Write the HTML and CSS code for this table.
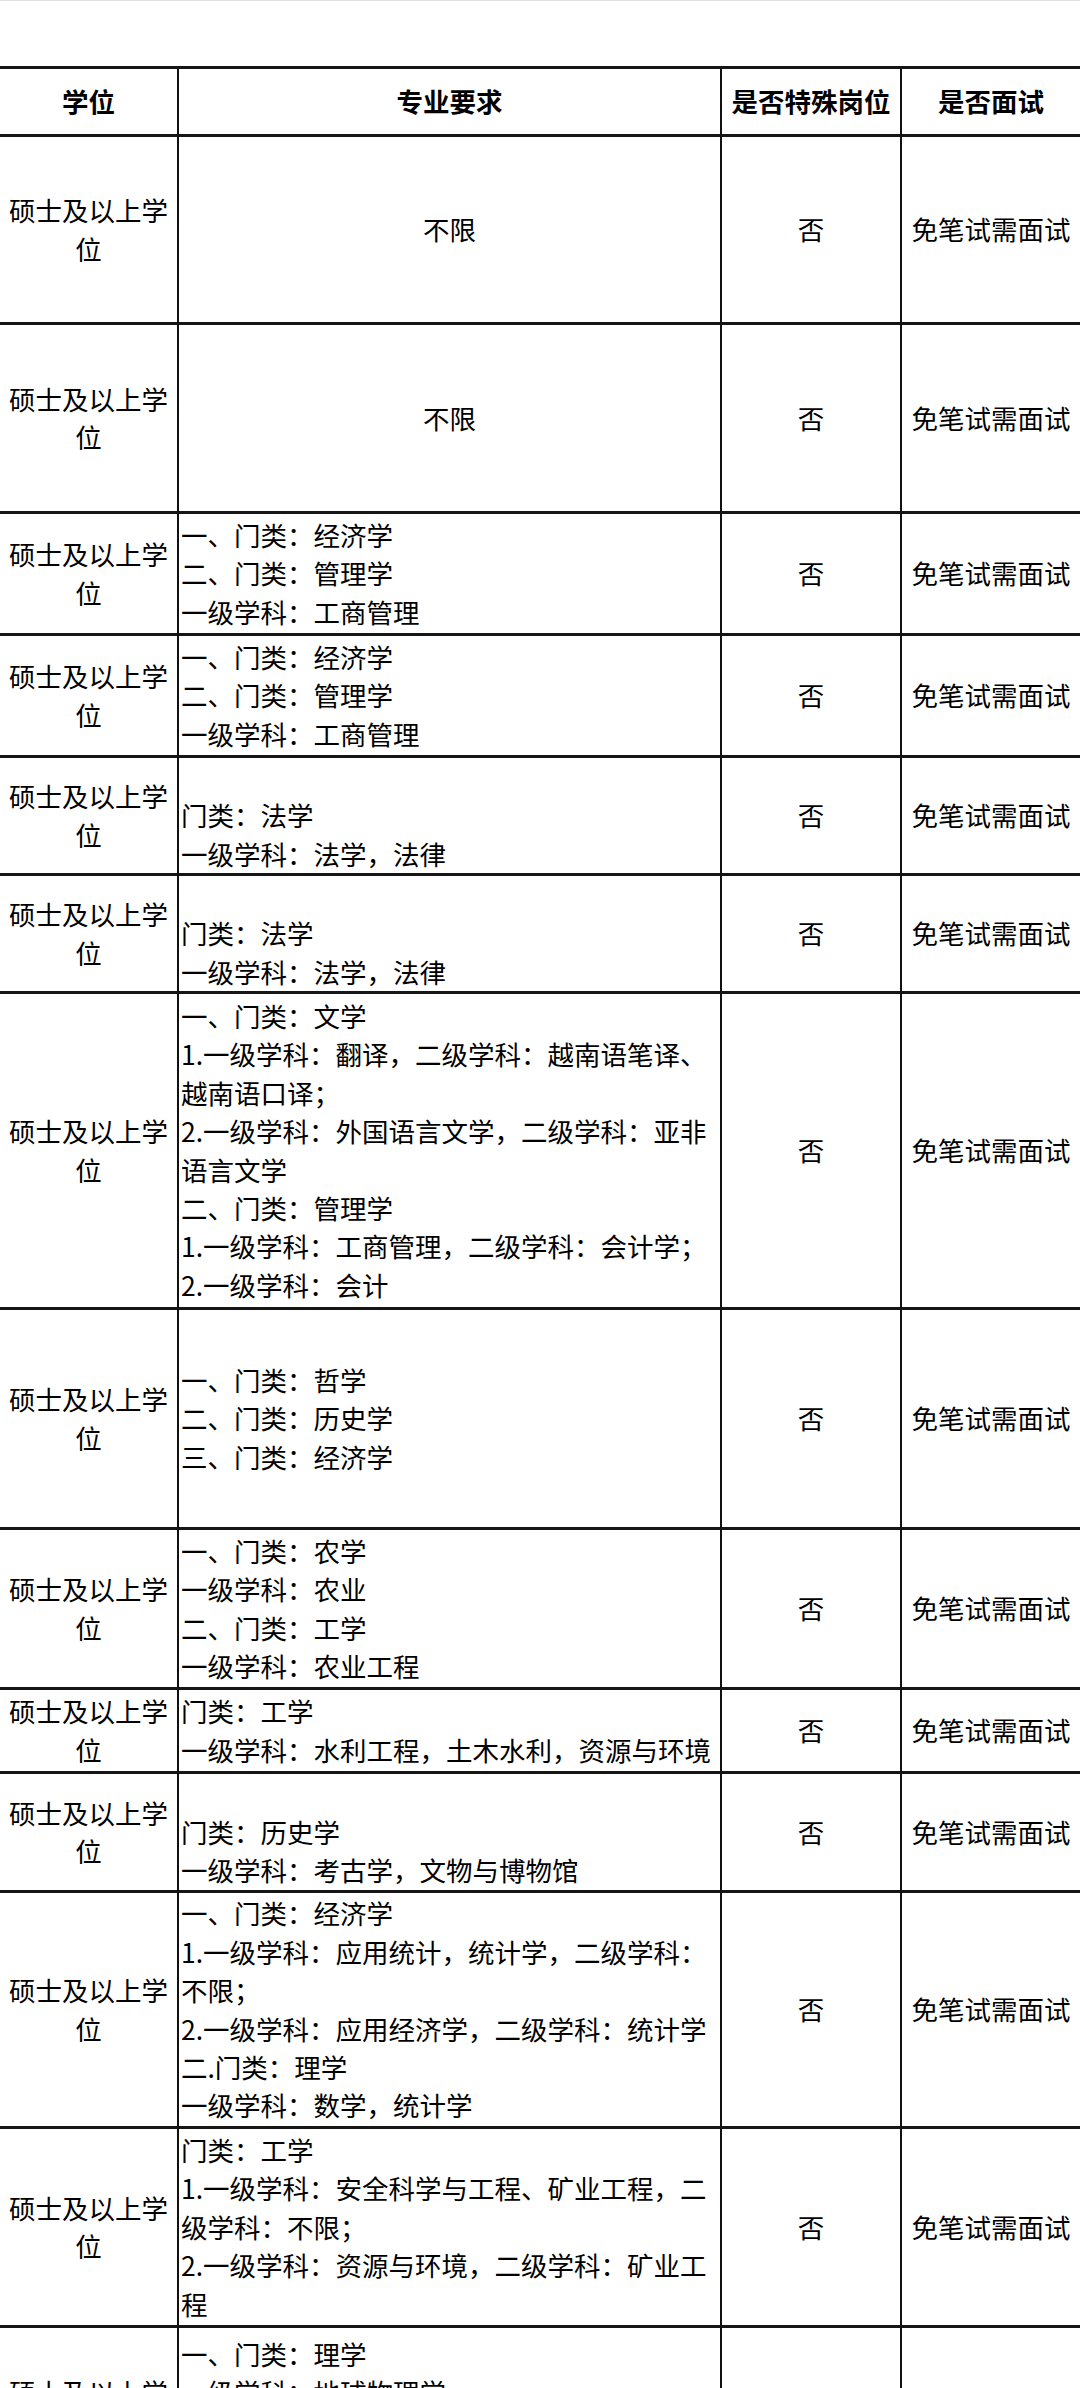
FILE: index.html
```html
<!DOCTYPE html>
<html lang="zh-CN">
<head>
<meta charset="utf-8">
<title>岗位表</title>
<link rel="stylesheet" href="styles.css">
</head>
<body>
<div class="topline"></div>
<div class="wrap">
  <div class="table">
    <div class="cell head c1">学位</div>
    <div class="cell head c2h">专业要求</div>
    <div class="cell head c3">是否特殊岗位</div>
    <div class="cell head c4">是否面试</div>

    <div class="cell c1">硕士及以上学位</div>
    <div class="cell c2h">不限</div>
    <div class="cell c3">否</div>
    <div class="cell c4">免笔试需面试</div>

    <div class="cell c1">硕士及以上学位</div>
    <div class="cell c2h">不限</div>
    <div class="cell c3">否</div>
    <div class="cell c4">免笔试需面试</div>

    <div class="cell c1">硕士及以上学位</div>
    <div class="cell c2"><p>一、门类：经济学<br>二、门类：管理学<br>一级学科：工商管理</p></div>
    <div class="cell c3">否</div>
    <div class="cell c4">免笔试需面试</div>

    <div class="cell c1">硕士及以上学位</div>
    <div class="cell c2"><p>一、门类：经济学<br>二、门类：管理学<br>一级学科：工商管理</p></div>
    <div class="cell c3">否</div>
    <div class="cell c4">免笔试需面试</div>

    <div class="cell c1">硕士及以上学位</div>
    <div class="cell c2"><p><br>门类：法学<br>一级学科：法学，法律</p></div>
    <div class="cell c3">否</div>
    <div class="cell c4">免笔试需面试</div>

    <div class="cell c1">硕士及以上学位</div>
    <div class="cell c2"><p><br>门类：法学<br>一级学科：法学，法律</p></div>
    <div class="cell c3">否</div>
    <div class="cell c4">免笔试需面试</div>

    <div class="cell c1">硕士及以上学位</div>
    <div class="cell c2"><p>一、门类：文学<br>1.一级学科：翻译，二级学科：越南语笔译、越南语口译；<br>2.一级学科：外国语言文学，二级学科：亚非语言文学<br>二、门类：管理学<br>1.一级学科：工商管理，二级学科：会计学；<br>2.一级学科：会计</p></div>
    <div class="cell c3">否</div>
    <div class="cell c4">免笔试需面试</div>

    <div class="cell c1">硕士及以上学位</div>
    <div class="cell c2"><p>一、门类：哲学<br>二、门类：历史学<br>三、门类：经济学</p></div>
    <div class="cell c3">否</div>
    <div class="cell c4">免笔试需面试</div>

    <div class="cell c1">硕士及以上学位</div>
    <div class="cell c2"><p>一、门类：农学<br>一级学科：农业<br>二、门类：工学<br>一级学科：农业工程</p></div>
    <div class="cell c3">否</div>
    <div class="cell c4">免笔试需面试</div>

    <div class="cell c1">硕士及以上学位</div>
    <div class="cell c2"><p>门类：工学<br>一级学科：水利工程，土木水利，资源与环境</p></div>
    <div class="cell c3">否</div>
    <div class="cell c4">免笔试需面试</div>

    <div class="cell c1">硕士及以上学位</div>
    <div class="cell c2"><p><br>门类：历史学<br>一级学科：考古学，文物与博物馆</p></div>
    <div class="cell c3">否</div>
    <div class="cell c4">免笔试需面试</div>

    <div class="cell c1">硕士及以上学位</div>
    <div class="cell c2"><p>一、门类：经济学<br>1.一级学科：应用统计，统计学，二级学科：不限；<br>2.一级学科：应用经济学，二级学科：统计学<br>二.门类：理学<br>一级学科：数学，统计学</p></div>
    <div class="cell c3">否</div>
    <div class="cell c4">免笔试需面试</div>

    <div class="cell c1">硕士及以上学位</div>
    <div class="cell c2"><p>门类：工学<br>1.一级学科：安全科学与工程、矿业工程，二级学科：不限；<br>2.一级学科：资源与环境，二级学科：矿业工程</p></div>
    <div class="cell c3">否</div>
    <div class="cell c4">免笔试需面试</div>

    <div class="cell c1">硕士及以上学位</div>
    <div class="cell c2"><p>一、门类：理学<br>一级学科：地球物理学<br>二、门类：工学<br>一级学科：地质资源与地质工程</p></div>
    <div class="cell c3">否</div>
    <div class="cell c4">免笔试需面试</div>
  </div>
</div>
</body>
</html>
```
FILE: styles.css
```css
html, body {
  margin: 0;
  padding: 0;
  background: #ffffff;
  overflow: hidden;
}
body {
  width: 1080px;
  height: 2388px;
  font-family: "Noto Sans CJK SC", "Noto Sans", sans-serif;
  color: #000000;
  font-size: 26.5px;
  line-height: 38.4px;
}
.topline {
  height: 1px;
  background: #e2e2e2;
}
.wrap {
  width: 1080px;
  overflow: hidden;
  padding-top: 65px;
}
.table {
  display: grid;
  width: 1082px;
  grid-template-columns: 179px 543px 180px 180px;
  grid-template-rows: 68px 188px 189px 122px 122px 118px 118px 316px 220px 160px 84px 119px 236px 199px 170px;
  border-top: 3px solid #161616;
}
.cell {
  box-sizing: border-box;
  border-right: 2px solid #111111;
  border-bottom: 3px solid #161616;
  display: flex;
  align-items: center;
  justify-content: center;
  text-align: center;
  min-width: 0;
}
.cell p {
  margin: 0;
}
.head {
  font-weight: 700;
}
.c1 {
  padding: 0 4px;
}
.c2 {
  justify-content: flex-start;
  text-align: left;
  padding: 0 2px;
}
.c2h {
  padding: 0 2px;
}
.c3 {
  padding: 0 2px;
}
.c4 {
  padding: 0 2px;
  white-space: nowrap;
}
```
